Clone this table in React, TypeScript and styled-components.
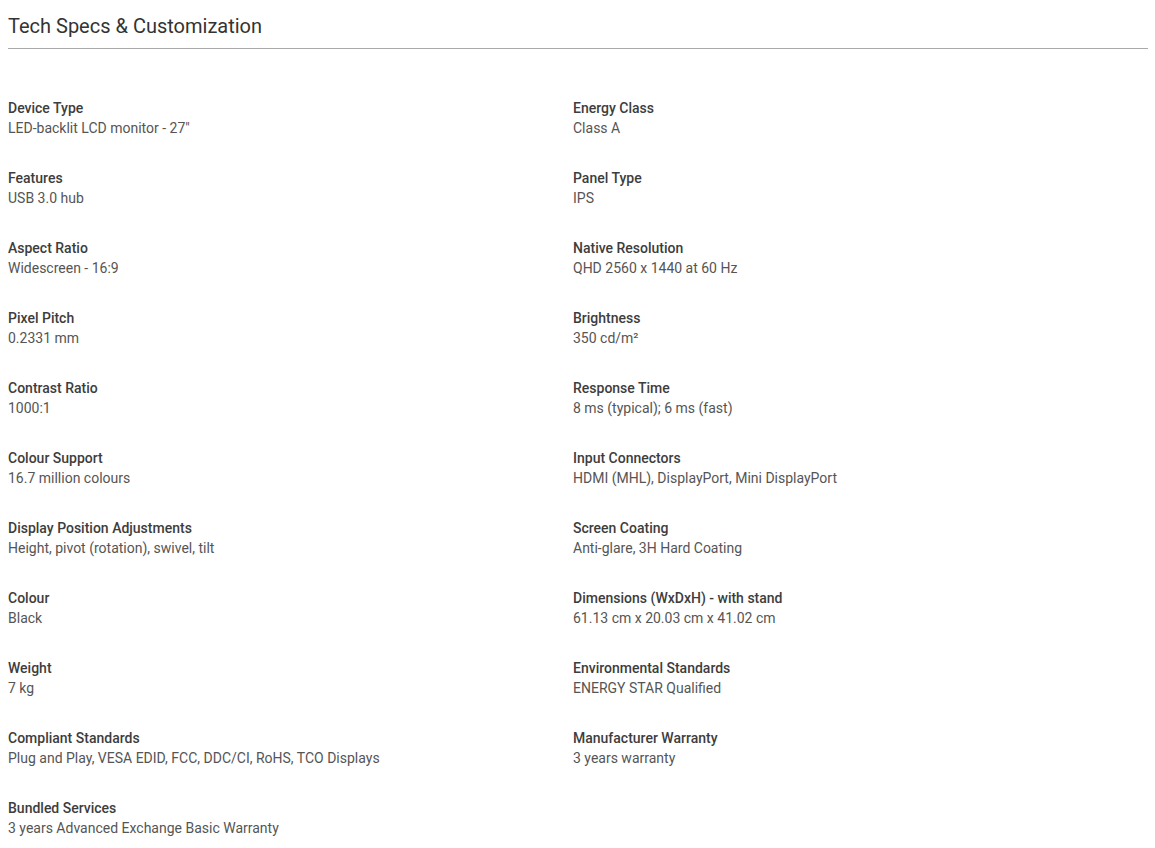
import styled, { createGlobalStyle } from 'styled-components';

const GlobalStyle = createGlobalStyle`
  body {
    margin: 8px 7px 8px 8px;
    background: #fff;
    font-family: Roboto, "Liberation Sans", Arial, sans-serif;
  }
`;

const StyledSection = styled.section`
  display: flex;
  flex-direction: column;
`;

const StyledTitle = styled.h2`
  margin: 0;
  padding: 0 0 4px 0;
  font-size: 20px;
  line-height: 36px;
  font-weight: 400;
  color: #333;
  border-bottom: 1px solid #a9a9a9;
`;

const StyledSpecGrid = styled.div`
  display: grid;
  grid-template-columns: 565px 1fr;
  row-gap: 30px;
  margin-top: 49px;
`;

const StyledSpecItem = styled.div`
  display: flex;
  flex-direction: column;
`;

const StyledLabel = styled.span`
  font-size: 14px;
  line-height: 20px;
  font-weight: 500;
  color: #3d3d3d;
`;

const StyledValue = styled.span`
  font-size: 14px;
  line-height: 20px;
  font-weight: 400;
  color: #555;
`;

interface specType {
  label: string;
  value: string;
}

const specs: specType[] = [
  { label: 'Device Type', value: 'LED-backlit LCD monitor - 27"' },
  { label: 'Energy Class', value: 'Class A' },
  { label: 'Features', value: 'USB 3.0 hub' },
  { label: 'Panel Type', value: 'IPS' },
  { label: 'Aspect Ratio', value: 'Widescreen - 16:9' },
  { label: 'Native Resolution', value: 'QHD 2560 x 1440 at 60 Hz' },
  { label: 'Pixel Pitch', value: '0.2331 mm' },
  { label: 'Brightness', value: '350 cd/m²' },
  { label: 'Contrast Ratio', value: '1000:1' },
  { label: 'Response Time', value: '8 ms (typical); 6 ms (fast)' },
  { label: 'Colour Support', value: '16.7 million colours' },
  { label: 'Input Connectors', value: 'HDMI (MHL), DisplayPort, Mini DisplayPort' },
  { label: 'Display Position Adjustments', value: 'Height, pivot (rotation), swivel, tilt' },
  { label: 'Screen Coating', value: 'Anti-glare, 3H Hard Coating' },
  { label: 'Colour', value: 'Black' },
  { label: 'Dimensions (WxDxH) - with stand', value: '61.13 cm x 20.03 cm x 41.02 cm' },
  { label: 'Weight', value: '7 kg' },
  { label: 'Environmental Standards', value: 'ENERGY STAR Qualified' },
  { label: 'Compliant Standards', value: 'Plug and Play, VESA EDID, FCC, DDC/CI, RoHS, TCO Displays' },
  { label: 'Manufacturer Warranty', value: '3 years warranty' },
  { label: 'Bundled Services', value: '3 years Advanced Exchange Basic Warranty' },
];

function SpecItem({ label, value }: specType) {
  return (
    <StyledSpecItem>
      <StyledLabel>{label}</StyledLabel>
      <StyledValue>{value}</StyledValue>
    </StyledSpecItem>
  );
}

export default function App() {
  return (
    <>
      <GlobalStyle />
      <StyledSection>
        <StyledTitle>Tech Specs &amp; Customization</StyledTitle>
        <StyledSpecGrid>
          {specs.map((spec) => (
            <SpecItem key={spec.label} label={spec.label} value={spec.value} />
          ))}
        </StyledSpecGrid>
      </StyledSection>
    </>
  );
}
